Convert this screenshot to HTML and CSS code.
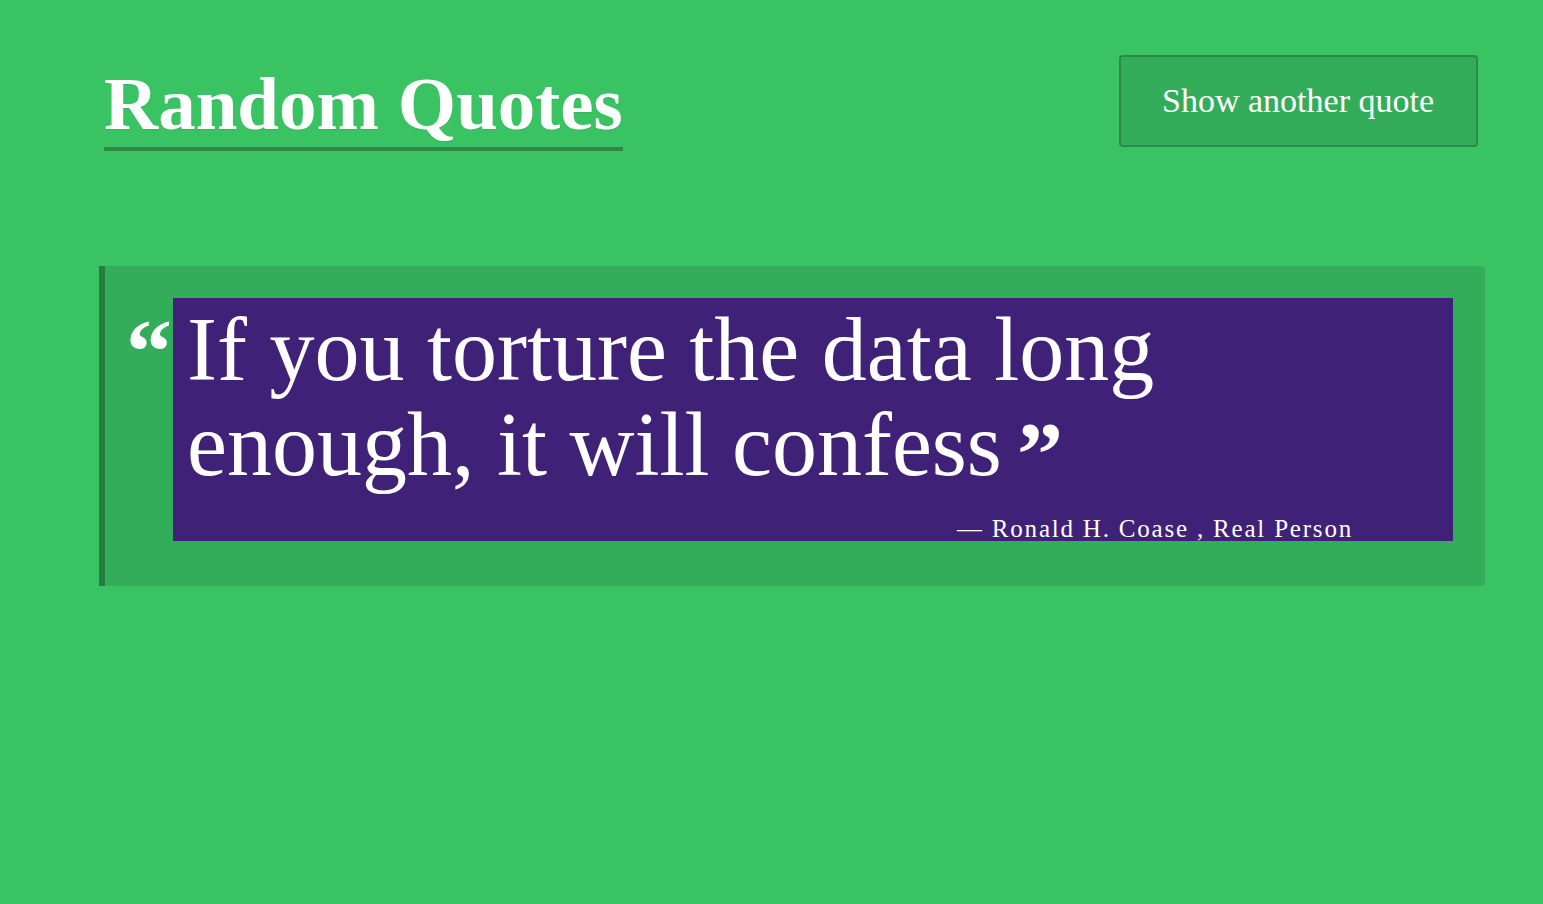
FILE: index.html
```html
<!DOCTYPE html>
<html lang="en">
<head>
<meta charset="utf-8">
<title>Random Quotes</title>
<link rel="stylesheet" href="styles.css">
</head>
<body>
<div class="page">
  <header class="header">
    <h1 class="title">Random Quotes</h1>
    <button class="btn" type="button">Show another quote</button>
  </header>
  <section class="quote-block">
    <span class="open-mark">“</span>
    <div class="quote-box">
      <p class="quote-text">If you torture the data long enough, it will confess<span class="close-mark">”</span></p>
      <p class="cite">— Ronald H. Coase , Real Person</p>
    </div>
  </section>
</div>
</body>
</html>
```
FILE: styles.css
```css
html, body {
  margin: 0;
  padding: 0;
}
body {
  background: #3ac363;
  font-family: "Liberation Serif", "Times New Roman", serif;
  color: #fff;
  height: 904px;
  overflow: hidden;
}
.page {
  width: 1386px;
  margin-left: 99px;
  padding-top: 55px;
}
.header {
  display: flex;
  justify-content: space-between;
  align-items: flex-start;
  padding: 0 7px 0 5px;
}
.title {
  margin: 0;
  font-size: 75px;
  font-weight: bold;
  line-height: 86px;
  padding-top: 6px;
  border-bottom: 4px solid #2a8a47;
  text-shadow: 0 1px 1px rgba(0,0,0,0.08);
}
.btn {
  font-family: "Liberation Serif", "Times New Roman", serif;
  font-size: 34px;
  line-height: 42px;
  color: #fff;
  background: #33ad5a;
  border: 2px solid #2a8a48;
  border-radius: 4px;
  padding: 23px 42px 23px 41px;
  cursor: pointer;
}
.quote-block {
  margin-top: 115px;
  display: flex;
  align-items: flex-start;
  background: #33ad5a;
  border-left: 6px solid #257d40;
  border-radius: 0 4px 4px 0;
  padding: 32px 32px 45px 21px;
}
.open-mark {
  font-weight: bold;
  font-size: 92px;
  line-height: 80px;
  height: 50px;
  width: 47px;
  flex: none;
  display: block;
  margin-top: 13px;
}
.quote-box {
  flex: 1;
  background: #3f2277;
  padding: 4px 14px 0 14px;
  height: 239px;
}
.quote-text {
  margin: 0;
  font-size: 90px;
  line-height: 95px;
}
.close-mark {
  font-weight: bold;
  font-size: 92px;
  line-height: 0;
  vertical-align: -10px;
  margin-left: 15px;
}
.cite {
  margin: 25px 86px 0 0;
  text-align: right;
  font-size: 25px;
  line-height: 24px;
  letter-spacing: 1.8px;
}
```
